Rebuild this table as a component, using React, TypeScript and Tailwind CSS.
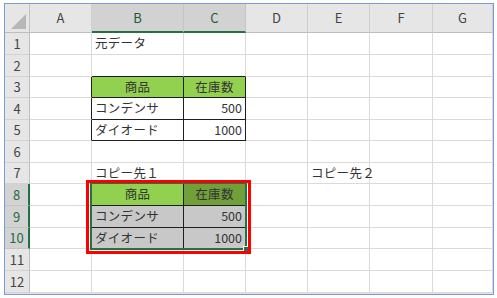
import React from "react";

type CellDef = {
    text?: string
    align?: "left" | "center" | "right"
    fill?: string
    num?: boolean
}

const columns = ["A", "B", "C", "D", "E", "F", "G"]
const rows = [1, 2, 3, 4, 5, 6, 7, 8, 9, 10, 11, 12]

const selectedCols = ["B", "C"]
const selectedRows = [8, 9, 10]

const sheet: Record<string, CellDef> = {
    B1: { text: "元データ" },
    B3: { text: "商品", align: "center", fill: "bg-[#92d050]" },
    C3: { text: "在庫数", align: "center", fill: "bg-[#92d050]" },
    B4: { text: "コンデンサ" },
    C4: { text: "500", align: "right", num: true },
    B5: { text: "ダイオード" },
    C5: { text: "1000", align: "right", num: true },
    B7: { text: "コピー先１" },
    E7: { text: "コピー先２" },
    B8: { text: "商品", align: "center", fill: "bg-[#92d050]" },
    C8: { text: "在庫数", align: "center", fill: "bg-[#71a03a]" },
    B9: { text: "コンデンサ", fill: "bg-[#c8c8c8]" },
    C9: { text: "500", align: "right", num: true, fill: "bg-[#c8c8c8]" },
    B10: { text: "ダイオード", fill: "bg-[#c8c8c8]" },
    C10: { text: "1000", align: "right", num: true, fill: "bg-[#c8c8c8]" },
}

// cells whose right / bottom edge belongs to one of the two tables
const blackRight = ["A3", "A4", "A5", "B3", "B4", "B5", "C3", "C4", "C5", "A8", "A9", "A10", "B8", "B9", "B10", "C8", "C9", "C10"]
const blackBottom = ["B2", "C2", "B3", "C3", "B4", "C4", "B5", "C5", "B7", "C7", "B8", "C8", "B9", "C9", "B10", "C10"]

const alignClass = {
    left: "justify-start pl-[3px]",
    center: "justify-center",
    right: "justify-end pr-[3px]",
}

const Cell: React.FunctionComponent<{ id: string }> = ({ id }) => {
    const def = sheet[id] || {}
    const right = blackRight.includes(id) ? "border-r-[#1e1e1e]" : "border-r-[#dadada]"
    const bottom = blackBottom.includes(id) ? "border-b-[#1e1e1e]" : "border-b-[#dadada]"

    return (
        <div className={`flex items-center overflow-visible whitespace-nowrap border-r border-b ${right} ${bottom} ${def.fill || "bg-white"} ${alignClass[def.align || "left"]}`}>
            {def.text && (
                // text spills over into the empty neighbour cell, like a real sheet
                <span className={def.num ? "relative z-[1] text-[12.5px] text-[#333333]" : "relative z-[1] text-[12.5px] tracking-[0.3px] text-[#333333]"}>
                    {def.text}
                </span>
            )}
        </div>
    )
}

const App: React.FunctionComponent = () => {
    return (
        <div className="w-[497px] h-[298px] bg-white pl-[4px] pt-[3px] font-['Noto_Sans_CJK_JP',sans-serif]">
            <div className="w-[490px] h-[292px] border border-[#7b9bd8] bg-[#e3e3e3] overflow-hidden">
                <div className="relative grid grid-cols-[25px_62px_92px_62px_62px_62px_63px_60px] grid-rows-[29px_22px_22px_21px_22px_21px_22px_21px_22px_22px_21px_22px_22px]">
                    {/* corner */}
                    <div className="relative bg-[#e6e6e6] border-r border-b border-r-[#c4c4c4] border-b-[#bdbdbd]">
                        <svg className="absolute right-[3px] bottom-[3px]" width="15" height="15" viewBox="0 0 15 15">
                            <path d="M15 0 L15 15 L0 15 Z" fill="#b7b7b7" />
                        </svg>
                    </div>

                    {columns.map((col) => {
                        const active = selectedCols.includes(col)
                        return (
                            <div
                                key={col}
                                className={active
                                    ? "flex items-center justify-center bg-[#d2d2d2] border-r border-r-[#c4c4c4] border-b-2 border-b-[#217346] text-[13px] text-[#1d5c3a]"
                                    : "flex items-center justify-center bg-[#e6e6e6] border-r border-r-[#cfcfcf] border-b border-b-[#bdbdbd] text-[13px] text-[#444444]"}
                            >
                                {col}
                            </div>
                        )
                    })}

                    {rows.map((row) => {
                        const active = selectedRows.includes(row)
                        return (
                            <React.Fragment key={row}>
                                <div
                                    className={active
                                        ? "flex items-center justify-center bg-[#d2d2d2] border-r-2 border-r-[#217346] border-b border-b-[#c4c4c4] text-[13px] text-[#1d6b45]"
                                        : "flex items-center justify-center bg-[#e6e6e6] border-r border-r-[#bdbdbd] border-b border-b-[#d2d2d2] text-[13px] text-[#444444]"}
                                >
                                    {row}
                                </div>
                                {columns.map((col) => (
                                    <Cell key={col + row} id={col + row} />
                                ))}
                            </React.Fragment>
                        )
                    })}

                    {/* selection over B8:C10 and the red marker around it */}
                    <div className="absolute z-[2] col-start-3 col-end-5 row-start-9 row-end-12 inset-0 pointer-events-none">
                        <div className="absolute -left-[2px] -top-[2px] -right-[1px] -bottom-[1px] border-2 border-[#217346]" />
                        <div className="absolute -right-[3px] -bottom-[3px] w-[6px] h-[6px] bg-[#217346] border border-white" />
                        <div className="absolute -left-[6px] -top-[4px] -right-[5px] -bottom-[5px] border-[3px] border-[#ff0000]" />
                    </div>
                </div>
            </div>
        </div>
    )
}

export default App
